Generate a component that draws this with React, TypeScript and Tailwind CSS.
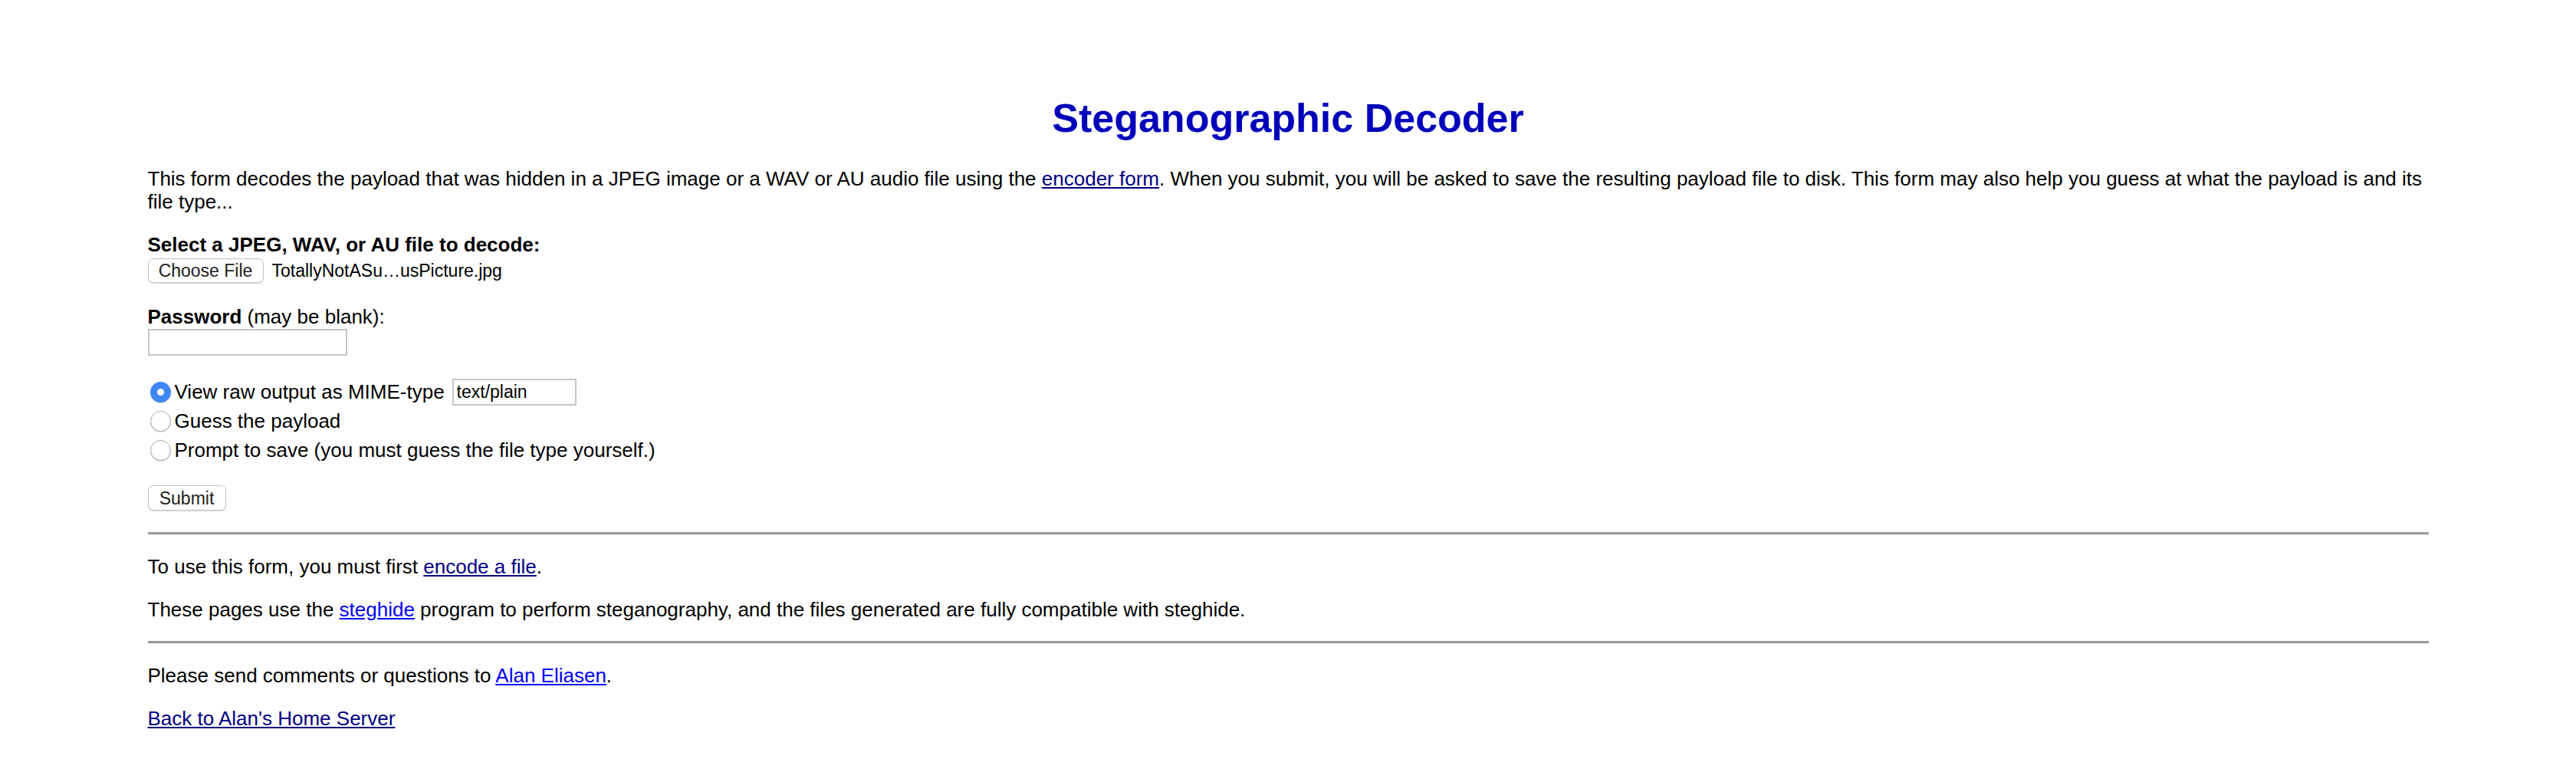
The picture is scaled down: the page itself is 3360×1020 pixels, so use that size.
import React from "react";

// Plain old-school form page, scaled as the reference (26px body text)
function Radio({ checked }: { checked?: boolean }) {
  if (checked) {
    return (
      <span className="ml-[3px] mr-[5px] flex h-[27px] w-[27px] shrink-0 items-center justify-center rounded-full bg-[#3f87f5] shadow-[0_1px_1px_rgba(0,0,0,0.2)]">
        <span className="h-[9px] w-[9px] rounded-full bg-white" />
      </span>
    );
  }
  return (
    <span className="ml-[3px] mr-[5px] h-[27px] w-[27px] shrink-0 rounded-full border-[1.5px] border-[#a8a8a8] bg-white shadow-[0_1px_1px_rgba(0,0,0,0.15)]" />
  );
}

function Hr() {
  return <div className="mb-[26px] h-[4px] border-t-[3px] border-b border-t-[#9b9b9b] border-b-[#ececec]" />;
}

export default function App() {
  return (
    <div className="min-h-[1020px] bg-white font-['Liberation_Sans',Arial,sans-serif] text-[26px] leading-[30px] text-black">
      <div className="mx-auto w-[2975px] pt-[124px]">
        <h1 className="mb-[34px] text-center text-[52px] font-bold leading-[60px] text-[#0000bb]">
          Steganographic Decoder
        </h1>

        <p className="mb-[26px]">
          This form decodes the payload that was hidden in a JPEG image or a WAV or AU audio file using the{" "}
          <a href="#" className="text-[#000080] underline">encoder form</a>. When you submit, you will be asked to
          save the resulting payload file to disk. This form may also help you guess at what the payload is and its
          file type...
        </p>

        <div className="mb-[26px]">
          <div className="font-bold">Select a JPEG, WAV, or AU file to decode:</div>
          <div className="flex h-[38px] items-start pt-[3px]">
            <button className="h-[32px] w-[151px] rounded-[7px] border border-[#c2c2c2] bg-white text-[23px] leading-[30px] text-[#222] shadow-[0_1px_1px_rgba(0,0,0,0.15)]">
              Choose File
            </button>
            <span className="ml-[11px] text-[23px] leading-[32px]">TotallyNotASu…usPicture.jpg</span>
          </div>
        </div>

        <div className="mb-[26px]">
          <div>
            <b>Password</b> (may be blank):
          </div>
          <div className="flex h-[38px] items-start pt-[1px]">
            <input
              type="password"
              className="h-[35px] w-[260px] border-2 border-[#c6c6c6] bg-white px-[4px] outline-none"
            />
          </div>
        </div>

        <div className="mb-[26px]">
          <div className="flex h-[38px] items-center">
            <Radio checked />
            <span>View raw output as MIME-type</span>
            <input
              type="text"
              defaultValue="text/plain"
              className="ml-[10px] h-[35px] w-[162px] border-2 border-[#c6c6c6] bg-white px-[4px] text-[23px] text-black outline-none"
            />
          </div>
          <div className="flex h-[38px] items-center">
            <Radio />
            <span>Guess the payload</span>
          </div>
          <div className="flex h-[38px] items-center">
            <Radio />
            <span>Prompt to save (you must guess the file type yourself.)</span>
          </div>
        </div>

        <div className="mb-[26px] flex h-[36px] items-start pt-[1px]">
          <button className="h-[33px] w-[102px] rounded-[7px] border border-[#c2c2c2] bg-white text-[23px] leading-[30px] text-[#222] shadow-[0_1px_1px_rgba(0,0,0,0.15)]">
            Submit
          </button>
        </div>

        <Hr />

        <p className="mb-[26px]">
          To use this form, you must first <a href="#" className="text-[#000080] underline">encode a file</a>.
        </p>
        <p className="mb-[26px]">
          These pages use the <a href="#" className="text-[#0000ff] underline">steghide</a> program to perform
          steganography, and the files generated are fully compatible with steghide.
        </p>

        <Hr />

        <p className="mb-[26px]">
          Please send comments or questions to <a href="#" className="text-[#0000ff] underline">Alan Eliasen</a>.
        </p>
        <p>
          <a href="#" className="text-[#000080] underline">Back to Alan's Home Server</a>
        </p>
      </div>
    </div>
  );
}
